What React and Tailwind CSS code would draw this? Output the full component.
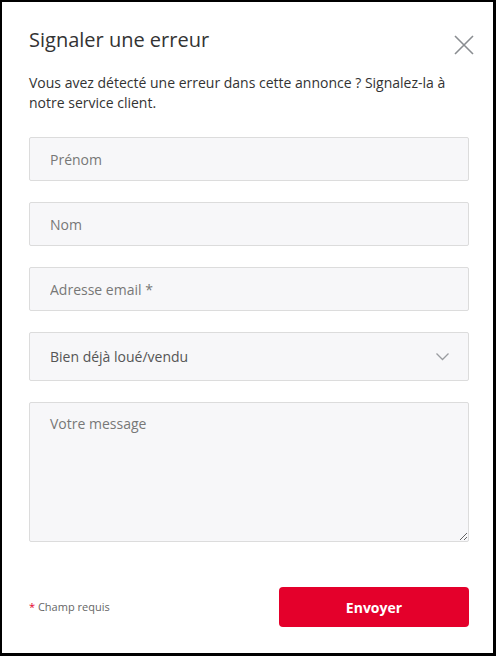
import React from "react";

const fields = ["Prénom", "Nom", "Adresse email *"];

const ReportError = () => {
  return (
    <div className="w-[496px] h-[656px] bg-black p-[2px] pr-[3px] pb-[3px]" style={{ fontFamily: "'Open Sans', sans-serif" }}>
      <div className="bg-white h-full px-[27px] pt-[26px]">
        <div className="flex justify-between items-start">
          <h2 className="text-[20px] leading-[24px] text-[#333] font-normal">Signaler une erreur</h2>
          <button className="mt-[6px] mr-[-9px] text-[#8a8d91]">
            <svg width="22" height="22" viewBox="0 0 22 22" fill="none" stroke="currentColor" strokeWidth="1.6">
              <path d="M2 2L20 20M20 2L2 20" />
            </svg>
          </button>
        </div>
        <p className="mt-[17px] text-[14px] leading-[20px] text-[#333] pr-[20px]">
          Vous avez détecté une erreur dans cette annonce ? Signalez-la à notre service client.
        </p>
        <form className="mt-[24px] flex flex-col gap-[21px]">
          {fields.map((f) => (
            <input
              key={f}
              placeholder={f}
              className="h-[44px] w-[440px] bg-[#f7f7f9] border border-[#dcdcdc] rounded-[2px] px-[20px] text-[14px] text-[#333] placeholder:text-[#777]"
            />
          ))}
          <div className="relative h-[49px] w-[440px] bg-[#f7f7f9] border border-[#dcdcdc] rounded-[2px] px-[20px] flex items-center text-[14px] text-[#555]">
            Bien déjà loué/vendu
            <svg className="absolute right-[19px] top-[20px]" width="13" height="8" viewBox="0 0 13 8" fill="none" stroke="#9a9ca0" strokeWidth="1.3">
              <path d="M0.5 0.5L6.5 6.5L12.5 0.5" />
            </svg>
          </div>
          <textarea
            placeholder="Votre message"
            className="h-[140px] w-[440px] bg-[#f7f7f9] border border-[#dcdcdc] rounded-[2px] px-[20px] py-[10px] text-[14px] text-[#333] placeholder:text-[#777]"
          />
        </form>
        <div className="mt-[45px] flex items-center justify-between w-[440px]">
          <span className="text-[11px] text-[#666]"><span className="text-[#e4002b]">*</span> Champ requis</span>
          <button className="w-[190px] h-[40px] rounded-[4px] bg-[#e4002b] text-white text-[14px] font-bold">Envoyer</button>
        </div>
      </div>
    </div>
  );
};

export default function App() {
  return <ReportError />;
}
